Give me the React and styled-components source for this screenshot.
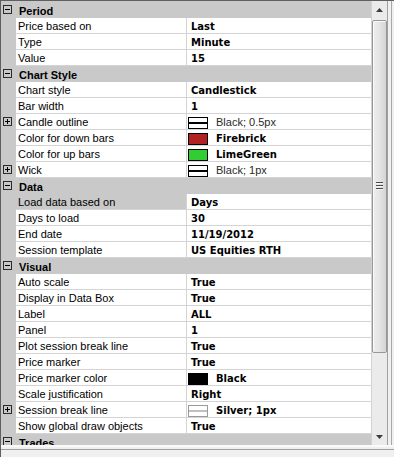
import styled, { createGlobalStyle } from "styled-components";

const GlobalStyle = createGlobalStyle`
    html, body {
        margin: 0;
        padding: 0;
        background: #f0f0f0;
    }
    * {
        box-sizing: border-box;
    }
`;

const sections = [
    {
        title: "Period",
        rows: [
            { name: "Price based on", value: "Last" },
            { name: "Type", value: "Minute" },
            { name: "Value", value: "15" },
        ],
    },
    {
        title: "Chart Style",
        rows: [
            { name: "Chart style", value: "Candlestick" },
            { name: "Bar width", value: "1" },
            { name: "Candle outline", value: "Black; 0.5px", line: "#000", plain: true, expand: true },
            { name: "Color for down bars", value: "Firebrick", color: "#b22222" },
            { name: "Color for up bars", value: "LimeGreen", color: "#32cd32" },
            { name: "Wick", value: "Black; 1px", line: "#000", plain: true, expand: true },
        ],
    },
    {
        title: "Data",
        rows: [
            { name: "Load data based on", value: "Days", selected: true },
            { name: "Days to load", value: "30" },
            { name: "End date", value: "11/19/2012" },
            { name: "Session template", value: "US Equities RTH" },
        ],
    },
    {
        title: "Visual",
        rows: [
            { name: "Auto scale", value: "True" },
            { name: "Display in Data Box", value: "True" },
            { name: "Label", value: "ALL" },
            { name: "Panel", value: "1" },
            { name: "Plot session break line", value: "True" },
            { name: "Price marker", value: "True" },
            { name: "Price marker color", value: "Black", color: "#000" },
            { name: "Scale justification", value: "Right" },
            { name: "Session break line", value: "Silver; 1px", line: "#c0c0c0", expand: true },
            { name: "Show global draw objects", value: "True" },
        ],
    },
    { title: "Trades", rows: [] },
];

const ToggleBox = ({ open }) => (
    <Toggle>
        <svg width="9" height="9" viewBox="0 0 9 9">
            <rect x="0.5" y="0.5" width="8" height="8" fill="none" stroke="#2b2b2b" />
            <line x1="2" y1="4.5" x2="7" y2="4.5" stroke="#000" />
            {!open && <line x1="4.5" y1="2" x2="4.5" y2="7" stroke="#000" />}
        </svg>
    </Toggle>
);

const Arrow = ({ up }) => (
    <svg width="7" height="4" viewBox="0 0 7 4">
        <polygon points={up ? "0,4 7,4 3.5,0" : "0,0 7,0 3.5,4"} fill="#3c3c3c" />
    </svg>
);

const App = () => {
    return (
        <>
            <GlobalStyle />
            <Frame>
                <Body>
                    <Grid>
                        {sections.map((s) => (
                            <div key={s.title}>
                                <Header>
                                    <Gutter>
                                        <ToggleBox open />
                                    </Gutter>
                                    <HeaderTitle>{s.title}</HeaderTitle>
                                </Header>
                                {s.rows.map((r) => (
                                    <Row key={r.name}>
                                        <Gutter>{r.expand && <ToggleBox />}</Gutter>
                                        <NameCell $selected={r.selected}>{r.name}</NameCell>
                                        <ValueCell $plain={r.plain} $swatch={r.color || r.line}>
                                            {r.color && <Swatch $fill={r.color} />}
                                            {r.line && <LineSwatch $stroke={r.line} />}
                                            <span>{r.value}</span>
                                        </ValueCell>
                                    </Row>
                                ))}
                            </div>
                        ))}
                    </Grid>
                    <ScrollBar>
                        <ArrowButton>
                            <Arrow up />
                        </ArrowButton>
                        <Thumb>
                            <Grip>
                                <i />
                                <i />
                                <i />
                            </Grip>
                        </Thumb>
                        <Track />
                        <ArrowButton>
                            <Arrow />
                        </ArrowButton>
                    </ScrollBar>
                    <RightEdge />
                </Body>
                <Footer />
            </Frame>
        </>
    );
};

const Frame = styled.div`
    width: 394px;
    height: 457px;
    overflow: hidden;
    background: #f0f0f0;
    border-top: 1px solid #5f5f5f;
    border-left: 1px solid #5f5f5f;
    font-family: "Liberation Sans", Arial, sans-serif;
    font-size: 11px;
    color: #000;
`;

const Body = styled.div`
    display: flex;
    height: 444px;
`;

const Grid = styled.div`
    width: 370px;
    height: 444px;
    overflow: hidden;
    background: #c9c9c9;
    padding-top: 1px;
`;

const Header = styled.div`
    display: flex;
    height: 16px;
    background: #c9c9c9;
`;

const HeaderTitle = styled.div`
    font-weight: bold;
    padding: 3px 0 0 3px;
    line-height: 13px;
`;

const Gutter = styled.div`
    flex: none;
    width: 15px;
    height: 100%;
    display: flex;
    align-items: center;
    padding-left: 2px;
    padding-bottom: 1px;
`;

const Toggle = styled.span`
    display: flex;
    width: 9px;
    height: 9px;
`;

const Row = styled.div`
    display: flex;
    height: 16px;
`;

const NameCell = styled.div`
    width: 171px;
    flex: none;
    padding: 2px 0 0 2px;
    line-height: 13px;
    white-space: nowrap;
    background: ${(p) => (p.$selected ? "#c9c9c9" : "#fff")};
    border-right: 1px solid #d4d4d4;
    border-bottom: 1px solid #d4d4d4;
`;

const ValueCell = styled.div`
    flex: 1;
    display: flex;
    align-items: flex-start;
    gap: 8px;
    padding-top: 2px;
    padding-left: ${(p) => (p.$swatch ? "1px" : "4px")};
    background: #fff;
    border-bottom: 1px solid #d4d4d4;
    white-space: nowrap;
    span {
        line-height: 13px;
        font-family: ${(p) => (p.$plain ? '"Liberation Sans", Arial, sans-serif' : '"DejaVu Sans", Verdana, sans-serif')};
        font-size: ${(p) => (p.$plain ? "11px" : "10px")};
        font-weight: ${(p) => (p.$plain ? "normal" : "bold")};
        color: ${(p) => (p.$plain ? "#2a2a2a" : "#000")};
    }
`;

const Swatch = styled.span`
    flex: none;
    width: 20px;
    height: 12px;
    margin-top: 1px;
    border: 1px solid #000;
    background: ${(p) => p.$fill};
`;

const LineSwatch = styled.span`
    flex: none;
    width: 20px;
    height: 12px;
    margin-top: 1px;
    border: 1px solid ${(p) => (p.$stroke === "#000" ? "#000" : "#9a9a9a")};
    background: linear-gradient(
        to bottom,
        #fff 4px,
        ${(p) => p.$stroke} 4px,
        ${(p) => p.$stroke} 6px,
        #fff 6px
    );
`;

const ScrollBar = styled.div`
    width: 16px;
    flex: none;
    display: flex;
    flex-direction: column;
    background: #ebebeb;
    border-left: 1px solid #d2d2d2;
`;

const ArrowButton = styled.div`
    height: 17px;
    flex: none;
    display: flex;
    align-items: center;
    justify-content: center;
`;

const Thumb = styled.div`
    height: 333px;
    margin: 2px 0 0 0;
    flex: none;
    display: flex;
    align-items: center;
    justify-content: center;
    border: 1px solid #979797;
    border-radius: 2px;
    background: linear-gradient(to right, #eeeeee, #e4e4e4 50%, #d5d5d5);
    box-shadow: inset 1px 1px 0 #fafafa;
`;

const Grip = styled.div`
    display: flex;
    flex-direction: column;
    gap: 1px;
    margin-top: -2px;
    i {
        display: block;
        width: 7px;
        height: 2px;
        border-top: 1px solid #4a4a4a;
        border-bottom: 1px solid #f4f4f4;
    }
`;

const Track = styled.div`
    flex: 1;
`;

const RightEdge = styled.div`
    flex: 1;
    border-left: 1px solid #a0a0a0;
    background: linear-gradient(to right, transparent 3px, #a8a8a8 3px, #a8a8a8 4px, transparent 4px);
`;

const Footer = styled.div`
    height: 12px;
    border-top: 2px solid #fafafa;
    background: linear-gradient(to bottom, transparent 2px, #a0a0a0 2px, #a0a0a0 3px, transparent 3px);
`;

export default App;
